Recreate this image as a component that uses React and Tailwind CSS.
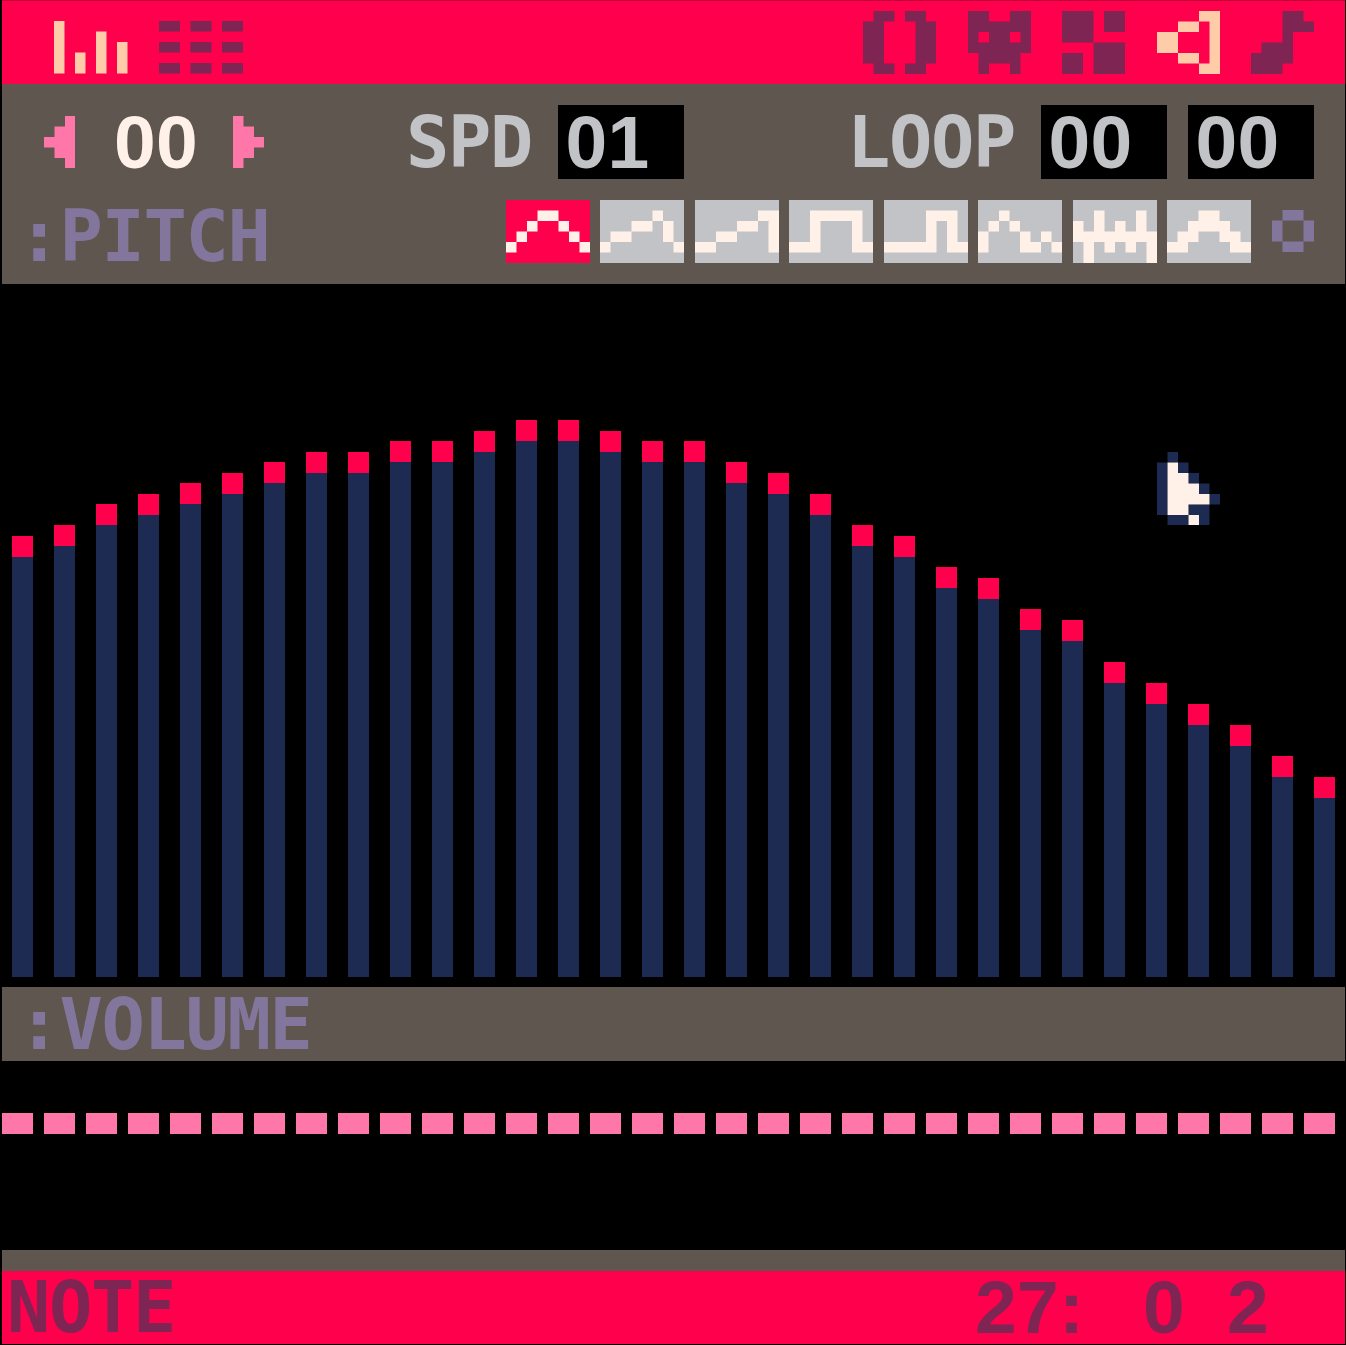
import React from "react";

const PEACH = "#ffccaa";
const PLUM = "#7e2553";
const PINK = "#ff77a8";
const LAVENDER = "#83769c";
const WHITE = "#fff1e8";
const NAVY = "#1d2b53";

// one pico-8 pixel is 10.5 screen pixels
const P = 10.5;

const ICONS = {
    bars: ["#......", "#...#..", "#...#.#", "#.#.#.#", "#.#.#.#"],
    grid: ["##.##.##", "........", "##.##.##", "........", "##.##.##"],
    code: [".##.##.", "##...##", "##...##", "##...##", "##...##", ".##.##."],
    cat: ["##..##", "######", "#.##.#", "######", ".####.", ".#..#."],
    sprite: ["###.##", "###.##", "###...", "...###", "##.###", "##.###"],
    speaker: ["....##", "..##.#", "##...#", "##...#", "..##.#", "....##"],
    note: ["...##.", "...###", "...#..", ".###..", "####..", "###..."],
    left: ["..#", ".##", "###", ".##", "..#"],
    right: ["#..", "##.", "###", "##.", "#.."],
    ring: [".##.", "#..#", "#..#", ".##."],
};

const CURSOR = [".n....", "nwn...", "nwwn..", "nwwwn.", "nwwwwn", "nwwnn.", ".nnwn."];

const WAVES = [
    ["........", "...##...", "..#..#..", ".#....#.", "#......#", "........"],
    ["........", ".....#..", "...##.#.", ".##...#.", "#......#", "........"],
    ["........", "......##", "....##.#", "..##...#", "##.....#", "........"],
    ["........", "..#####.", "..#...#.", "..#...#.", "###...##", "........"],
    ["........", "....###.", "....#.#.", "....#.#.", "#####.##", "........"],
    ["........", "..#.....", ".#.#....", "#...#.#.", "#...##.#", "........"],
    ["........", "..#...#.", "#.#.#.#.", "########", ".#.#.#.#", ".#.....#"],
    ["........", "...##...", "..####..", ".##..##.", "##....##", "........"],
];

const PITCH = [
    51, 50, 48, 47, 46, 45, 44, 43, 43, 42, 42, 41, 40, 40, 41, 42,
    42, 44, 45, 47, 50, 51, 54, 55, 58, 59, 63, 65, 67, 69, 72, 74,
];

function pixelPath(rows, ch) {
    let d = "";
    rows.forEach((row, y) => {
        [...row].forEach((c, x) => {
            if (c === ch) d += `M${x} ${y}h1v1h-1z`;
        });
    });
    return d;
}

function Pix({ rows, fill, className = "" }) {
    const w = rows[0].length;
    const h = rows.length;
    return (
        <svg
            width={w * P}
            height={h * P}
            viewBox={`0 0 ${w} ${h}`}
            className={`block shrink-0 ${className}`}
        >
            <path d={pixelPath(rows, "#")} fill={fill} />
        </svg>
    );
}

function Word({ children, className = "" }) {
    return (
        <span
            className={`block h-[52.5px] -ml-[5px] whitespace-pre font-['DejaVu_Sans_Mono',monospace] text-[72px] font-bold leading-[53px] tracking-[-1.35px] ${className}`}
        >
            {children}
        </span>
    );
}

function Digits({ children, className = "" }) {
    return (
        <span
            className={`block h-[52.5px] -ml-[3px] whitespace-pre font-['Liberation_Sans',sans-serif] text-[75px] font-bold leading-[52.5px] tracking-[0.3px] ${className}`}
        >
            {children}
        </span>
    );
}

function NumBox({ children, className = "" }) {
    return (
        <div className={`flex h-[73.5px] w-[126px] shrink-0 items-center bg-black pl-[10.5px] ${className}`}>
            <Digits className="text-[#c2c3c7]">{children}</Digits>
        </div>
    );
}

export default function App() {
    return (
        <div className="relative h-[1345px] w-[1346px] bg-black pl-[1.5px] pr-[1px]">
            {/* Top tabs */}
            <div className="flex h-[84px] border-t border-[#b8003a] bg-[#ff004d] pl-[52.5px] pr-[31px] pt-[9.5px]">
                <Pix rows={ICONS.bars} fill={PEACH} className="mt-[10.5px]" />
                <Pix rows={ICONS.grid} fill={PLUM} className="ml-[31.5px] mt-[10.5px]" />
                <div className="ml-auto flex gap-[31.5px]">
                    <Pix rows={ICONS.code} fill={PLUM} />
                    <Pix rows={ICONS.cat} fill={PLUM} />
                    <Pix rows={ICONS.sprite} fill={PLUM} />
                    <Pix rows={ICONS.speaker} fill={PEACH} />
                    <Pix rows={ICONS.note} fill={PLUM} />
                </div>
            </div>

            {/* SFX controls */}
            <div className="flex h-[199.5px] flex-col gap-[21px] bg-[#5f574f] py-[21px]">
                <div className="flex h-[73.5px] items-center pl-[42px]">
                    <Pix rows={ICONS.left} fill={PINK} />
                    <div className="ml-[42px] w-[84px] shrink-0">
                        <Digits className="text-[#fff1e8]">00</Digits>
                    </div>
                    <Pix rows={ICONS.right} fill={PINK} className="ml-[31.5px]" />
                    <div className="ml-[147px] w-[126px] shrink-0">
                        <Word className="text-[#c2c3c7]">SPD</Word>
                    </div>
                    <NumBox className="ml-[21px]">01</NumBox>
                    <div className="ml-[168px] w-[168px] shrink-0">
                        <Word className="text-[#c2c3c7]">LOOP</Word>
                    </div>
                    <NumBox className="ml-[21px]">00</NumBox>
                    <NumBox className="ml-[21px]">00</NumBox>
                </div>
                <div className="flex h-[63px] items-end pl-[21px] pr-[31px]">
                    <Word className="text-[#83769c]">:PITCH</Word>
                    <div className="ml-auto flex gap-[10.5px]">
                        {WAVES.map((wave, i) => (
                            <div key={i} className={i === 0 ? "bg-[#ff004d]" : "bg-[#c2c3c7]"}>
                                <Pix rows={wave} fill={WHITE} />
                            </div>
                        ))}
                    </div>
                    <Pix rows={ICONS.ring} fill={LAVENDER} className="mb-[10.5px] ml-[21px]" />
                </div>
            </div>

            {/* Pitch graph */}
            <div className="flex h-[703.5px] items-end gap-[21px] pb-[10.5px] pl-[10.5px]">
                {PITCH.map((top, i) => (
                    <div
                        key={i}
                        className="flex w-[21px] shrink-0 flex-col bg-[#1d2b53]"
                        style={{ height: (93 - top) * P }}
                    >
                        <div className="h-[21px] bg-[#ff004d]" />
                    </div>
                ))}
            </div>

            {/* Volume */}
            <div className="h-[73.5px] bg-[#5f574f] pl-[21px] pt-[10.5px]">
                <Word className="text-[#83769c]">:VOLUME</Word>
            </div>
            <div className="flex h-[189px] gap-[10.5px] pt-[52.5px]">
                {PITCH.map((_, i) => (
                    <div key={i} className="h-[21px] w-[31.5px] shrink-0 bg-[#ff77a8]" />
                ))}
            </div>

            {/* Status bar */}
            <div className="h-[21px] bg-[#5f574f]" />
            <div className="flex h-[73.5px] bg-[#ff004d] pl-[10.5px] pt-[10.5px] text-[#7e2553]">
                <div className="w-[966px] shrink-0">
                    <Word>NOTE</Word>
                </div>
                <div className="w-[168px] shrink-0">
                    <Digits>27:</Digits>
                </div>
                <div className="w-[84px] shrink-0">
                    <Digits>0</Digits>
                </div>
                <Digits>2</Digits>
            </div>

            {/* Mouse cursor */}
            <svg
                width={6 * P}
                height={7 * P}
                viewBox="0 0 6 7"
                className="absolute left-[1156.5px] top-[451.5px]"
            >
                <path d={pixelPath(CURSOR, "n")} fill={NAVY} />
                <path d={pixelPath(CURSOR, "w")} fill={WHITE} />
            </svg>
        </div>
    );
}
